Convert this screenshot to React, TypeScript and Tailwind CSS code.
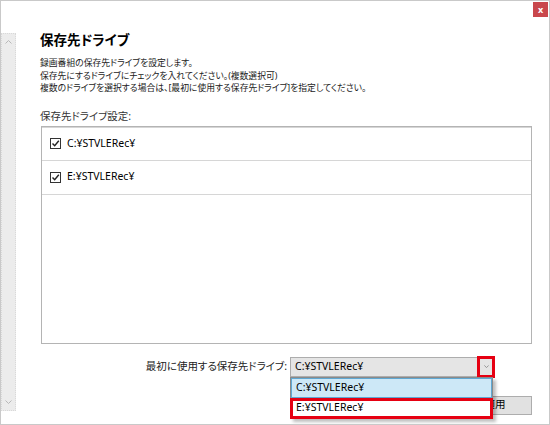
import React from "react";

const font = "[font-family:'Noto_Sans','Noto_Sans_CJK_JP',sans-serif] [font-feature-settings:'palt']";

function Chevron({ up = false, className = "" }: { up?: boolean; className?: string }) {
  return (
    <svg width="7" height="4" viewBox="0 0 7 4" className={className}>
      <path
        d={up ? "M0.5 3.5 L3.5 0.5 L6.5 3.5" : "M0.5 0.5 L3.5 3.5 L6.5 0.5"}
        fill="none"
        stroke="currentColor"
        strokeWidth="1"
      />
    </svg>
  );
}

function Checkbox() {
  return (
    <span className="flex h-[11px] w-[11px] items-center justify-center border border-[#333] bg-white">
      <svg width="9" height="9" viewBox="0 0 9 9">
        <path d="M1.5 4.5 L3.7 6.8 L7.8 1.8" fill="none" stroke="#222" strokeWidth="1.4" />
      </svg>
    </span>
  );
}

function DriveRow({ label, first = false }: { label: string; first?: boolean }) {
  return (
    <div
      className={`flex h-[34px] items-center gap-[6px] border-b border-[#d6d6d6] pl-[8px] ${
        first ? "border-t" : ""
      }`}
    >
      <Checkbox />
      <span className="text-[10.5px] text-black">{label}</span>
    </div>
  );
}

export default function App() {
  return (
    <div className={`${font} h-[425px] w-[550px] overflow-hidden border border-[#c9c9c9] bg-white text-black`}>
      {/* title bar */}
      <div className="flex h-[31px] justify-end">
        <button
          type="button"
          className="mr-px mt-px flex h-[15px] w-[15px] items-center justify-center bg-[#c9474c] text-[9px] font-bold leading-none text-white"
        >
          x
        </button>
      </div>

      <div className="flex">
        {/* left scrollbar */}
        <div className="mt-px flex h-[378px] w-[15px] flex-col items-center justify-between border border-dotted border-[#d9d9d9] bg-[#ececec] py-[6px] text-[#b8b8b8]">
          <Chevron up />
          <Chevron />
        </div>

        {/* content */}
        <div className="ml-[24px] w-[492px]">
          <h1 className="h-[16px] text-[13.5px] font-bold leading-[16px]">保存先ドライブ</h1>

          <div className="mt-[9px] text-[8.8px] leading-[12.5px] text-[#1a1a1a]">
            <p>録画番組の保存先ドライブを設定します。</p>
            <p>保存先にするドライブにチェックを入れてください。(複数選択可)</p>
            <p>複数のドライブを選択する場合は、[最初に使用する保存先ドライブ]を指定してください。</p>
          </div>

          <p className="mt-[14px] text-[10.5px] leading-[14px] text-[#333]">保存先ドライブ設定:</p>

          <div className="ml-px mt-[3px] h-[218px] w-[491px] border border-[#b4b4b4] bg-white">
            <DriveRow label="C:¥STVLERec¥" first />
            <DriveRow label="E:¥STVLERec¥" />
          </div>

          {/* combo row */}
          <div className="mt-[13px] flex items-center justify-end gap-[3px] pr-[39px]">
            <span className="text-[10.5px] text-[#222]">最初に使用する保存先ドライブ:</span>
            <div className="relative z-10 flex h-[20px] w-[203px] items-center border border-[#adadad] bg-[#e5e5e5] pl-[4px] text-[10.5px]">
              C:¥STVLERec¥
              <span className="absolute right-[-3px] top-[-2px] flex h-[22px] w-[18px] items-center justify-center border-[3px] border-[#e60012] text-[#777]">
                <Chevron className="h-[3px] w-[5px]" />
              </span>
              <div className="absolute left-[-1px] top-[19px] w-[203px] border border-[#8a8a8a] bg-white text-[10.5px] shadow-[3px_3px_3px_rgba(0,0,0,0.25)]">
                <div className="flex h-[20px] items-center border border-[#5fa8d3] bg-[#cde8f7] pl-[4px]">C:¥STVLERec¥</div>
                <div className="-mx-px -mb-px flex h-[21px] items-center border-[3px] border-[#e60012] bg-white pl-[3px]">
                  E:¥STVLERec¥
                </div>
              </div>
            </div>
          </div>

          {/* apply button, partly under the open dropdown */}
          <div className="mt-[19px] flex justify-end">
            <button
              type="button"
              className="flex h-[19px] w-[74px] items-center justify-center border border-[#adadad] bg-[#e1e1e1] text-[10.5px] text-black"
            >
              適用
            </button>
          </div>
        </div>
      </div>
    </div>
  );
}
